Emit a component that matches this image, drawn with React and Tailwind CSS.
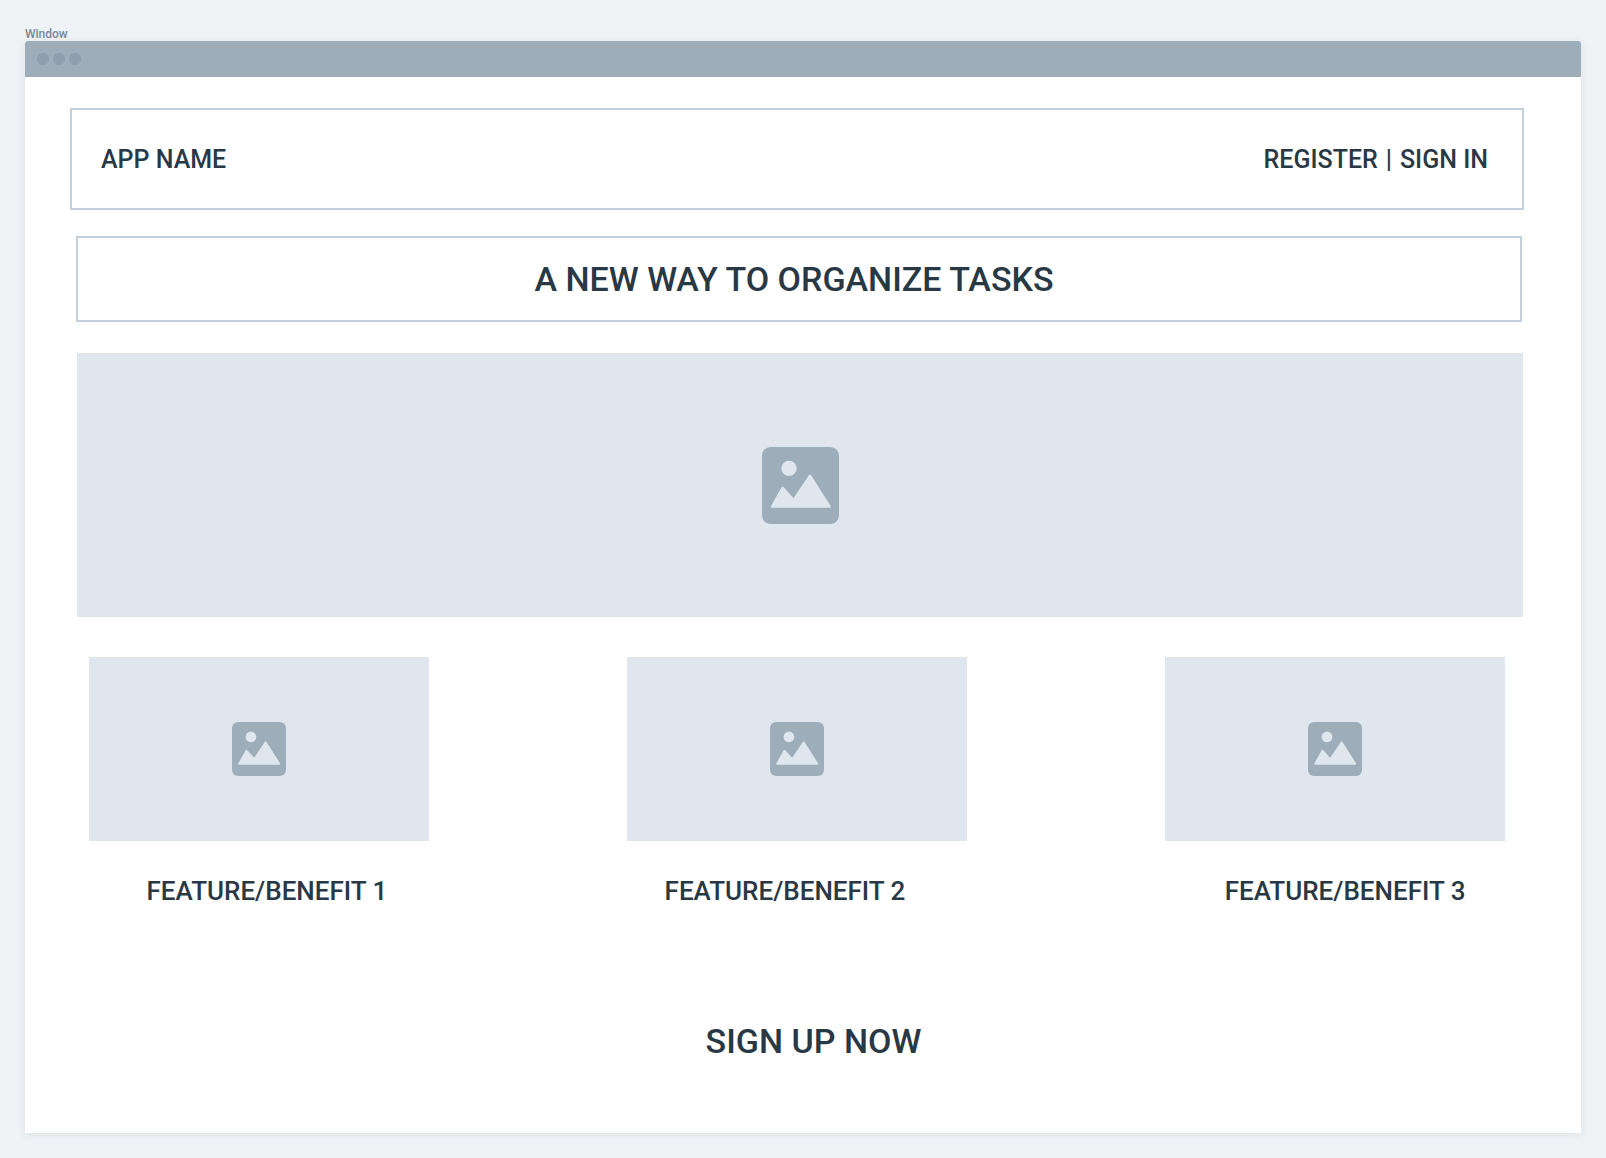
function ImageIcon({ className }) {
  return (
    <svg viewBox="0 0 231 231" className={className} aria-hidden="true">
      <rect width="231" height="231" rx="26" fill="#9dadb9" />
      <circle cx="81" cy="64" r="23" fill="#dfe6ee" />
      <path
        d="M30 179 L62 122 L95 159 L144 86 L203 179 Z"
        fill="#dfe6ee"
        stroke="#dfe6ee"
        strokeWidth="7"
        strokeLinejoin="round"
      />
    </svg>
  );
}

function Feature({ label, captionClass }) {
  return (
    <figure className="w-[24%]">
      <div className="flex h-46 items-center justify-center bg-[#dfe6ee]">
        <ImageIcon className="size-[54px]" />
      </div>
      <figcaption className={`mt-8 text-center text-[26px] leading-9 whitespace-nowrap ${captionClass}`}>
        {label}
      </figcaption>
    </figure>
  );
}

export default function App() {
  return (
    <div className="flex min-h-screen flex-col bg-[#eff3f6] px-[25px] pt-[27px] pb-[25px] font-['Roboto',sans-serif] font-medium text-[#293845]">
      <div className="text-xs leading-[14px] text-[#788896]">Window</div>
      <div className="flex grow flex-col rounded-t-[3px] bg-white shadow-[0_2px_10px_rgba(41,56,69,0.09)]">
        <div className="flex h-9 items-center gap-1 rounded-t-[3px] bg-[#9dadb9] px-3">
          <span className="size-3 rounded-full bg-[#8e9eac]" />
          <span className="size-3 rounded-full bg-[#8e9eac]" />
          <span className="size-3 rounded-full bg-[#8e9eac]" />
        </div>

        <header className="mt-[31px] mr-[57px] ml-[45px] flex h-[102px] items-center justify-between border-2 border-[#c3d0db] pt-0.5 pr-[34px] pl-[29px] text-[25px] leading-9">
          <a href="#home">APP NAME</a>
          <nav className="flex gap-2">
            <a href="#register">REGISTER</a>
            <span>|</span>
            <a href="#signin">SIGN IN</a>
          </nav>
        </header>

        <main className="mr-[58px] ml-[51px] flex flex-col">
          <h1 className="mt-[26px] mr-px flex h-[86px] items-center justify-center border-2 border-[#c3d0db] pr-2.5 text-[34px] leading-10">
            A NEW WAY TO ORGANIZE TASKS
          </h1>
          <div className="mt-[31px] ml-px flex h-66 items-center justify-center bg-[#dfe6ee]">
            <ImageIcon className="size-[77px]" />
          </div>
          <section className="mt-10 mr-[18px] ml-[13px] flex justify-between">
            <Feature label="FEATURE/BENEFIT 1" captionClass="pl-4" />
            <Feature label="FEATURE/BENEFIT 2" captionClass="pr-6" />
            <Feature label="FEATURE/BENEFIT 3" captionClass="pl-5" />
          </section>
          <div className="mt-28 mb-[71px] flex justify-center pl-7">
            <button type="button" className="text-[34px] leading-10">
              SIGN UP NOW
            </button>
          </div>
        </main>
      </div>
    </div>
  );
}
